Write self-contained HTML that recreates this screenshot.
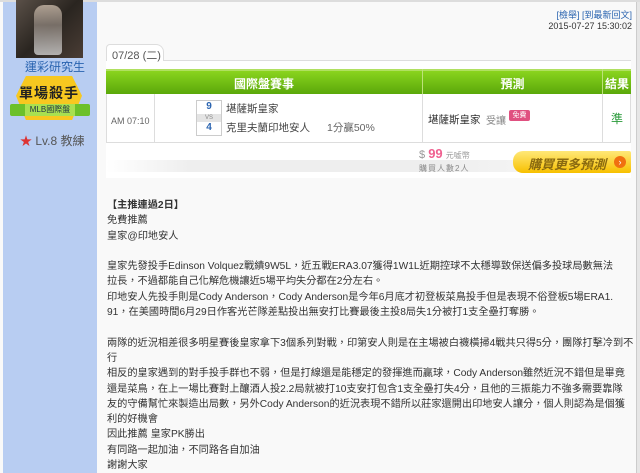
<!DOCTYPE html>
<html><head><meta charset="utf-8"><style>
*{margin:0;padding:0;box-sizing:border-box}
body{width:640px;height:473px;overflow:hidden;background:#f9f9f9;font-family:"Liberation Sans","Noto Sans CJK TC",sans-serif;font-size:11px;color:#333;position:relative}
.abs{position:absolute}
#side{left:3px;top:0;width:94px;height:473px;background:#b8cdf2}
#rb{left:636px;top:0;width:4px;height:473px;background:#e6e6e6;border-left:1px solid #ccc}
.t{white-space:nowrap}
.body p{height:15.3px;line-height:15.3px;white-space:nowrap}
</style></head><body>
<div id="side" class="abs"></div>
<div id="rb" class="abs"></div>
<div class="abs" style="left:0;top:0;width:640px;height:2px;background:#ddd"></div>
<!-- avatar -->
<div class="abs" style="left:16px;top:0;width:67px;height:58px;background:linear-gradient(135deg,#5a5048,#2a2520 50%,#4a3d35);"></div>
<div class="abs" style="left:34px;top:5px;width:28px;height:50px;background:linear-gradient(#c8b8a8,#8a8078 40%,#d0d0d0);border-radius:10px 10px 4px 4px;opacity:.8"></div>
<div class="abs t" style="left:25px;top:58px;color:#2a64b0;font-size:12px">運彩研究生</div>
<!-- badge -->
<div class="abs" style="left:16px;top:76px;width:66px;height:44px;background:#f7c820;clip-path:polygon(15% 0,85% 0,100% 45%,85% 100%,15% 100%,0 45%)"></div>
<div class="abs t" style="left:17px;top:83px;width:64px;text-align:center;font-weight:bold;font-size:14px;color:#222;letter-spacing:1px">單場殺手</div>
<div class="abs" style="left:10px;top:104px;width:80px;height:12px;background:#6cc02a;border-radius:2px"></div>
<div class="abs t" style="left:25px;top:104px;width:50px;height:12px;background:#a8e050;font-size:8px;text-align:center;line-height:12px;color:#234">MLB國際盤</div>
<div class="abs t" style="left:20px;top:132px;font-size:12px;color:#555"><span style="color:#d33">★</span> Lv.8 教練</div>
<!-- top right -->
<div class="abs t" style="right:8px;top:8px;font-size:9px;color:#2a64b0">[檢舉] [到最新回文]</div>
<div class="abs t" style="right:8px;top:21px;font-size:9px;color:#333">2015-07-27 15:30:02</div>
<!-- card -->
<div class="abs" style="left:106px;top:60px;width:525px;height:118px;background:#fff;border-top:1px solid #ddd"></div>
<div class="abs t" style="left:106px;top:44px;width:58px;height:17px;background:#fff;border:1px solid #ddd;border-bottom:none;border-radius:4px 8px 0 0;padding:2px 5px;color:#555;font-size:11px">07/28 (二)</div>
<div class="abs" style="left:106px;top:69px;width:525px;height:25px;background:linear-gradient(#8ad41e,#5aa80a);border-top:2px solid #b0e060"></div>
<div class="abs t" style="left:106px;top:75px;width:316px;text-align:center;color:#fff;font-weight:bold;font-size:12px">國際盤賽事</div>
<div class="abs" style="left:422px;top:69px;width:1px;height:25px;background:#bde27a"></div>
<div class="abs t" style="left:423px;top:75px;width:179px;text-align:center;color:#fff;font-weight:bold;font-size:12px">預測</div>
<div class="abs" style="left:602px;top:69px;width:1px;height:25px;background:#bde27a"></div>
<div class="abs t" style="left:603px;top:75px;width:28px;text-align:center;color:#fff;font-weight:bold;font-size:12px">結果</div>
<div class="abs" style="left:106px;top:94px;width:525px;height:49px;border:1px solid #ddd;border-top:none"></div>
<div class="abs" style="left:154px;top:94px;width:1px;height:48px;background:#ddd"></div>
<div class="abs" style="left:422px;top:94px;width:1px;height:48px;background:#ddd"></div>
<div class="abs" style="left:602px;top:94px;width:1px;height:48px;background:#ddd"></div>
<div class="abs t" style="left:111px;top:116px;font-size:9px;color:#666">AM 07:10</div>
<div class="abs" style="left:196px;top:100px;width:26px;height:36px;border:1px solid #ccc;background:#fff"></div>
<div class="abs t" style="left:196px;top:101px;width:26px;text-align:center;color:#2a64b0;font-weight:bold;font-size:10px">9</div>
<div class="abs" style="left:197px;top:114px;width:24px;height:8px;background:#e4e4e4;font-size:6px;text-align:center;color:#888;line-height:8px">VS</div>
<div class="abs t" style="left:196px;top:122px;width:26px;text-align:center;color:#2a64b0;font-weight:bold;font-size:10px">4</div>
<div class="abs t" style="left:226px;top:101px;font-size:10.5px;color:#444">堪薩斯皇家</div>
<div class="abs t" style="left:226px;top:120px;font-size:10.5px;color:#444">克里夫蘭印地安人</div>
<div class="abs t" style="left:327px;top:120px;font-size:10.5px;color:#666">1分贏50%</div>
<div class="abs t" style="left:428px;top:112px;font-size:10.5px;color:#333">堪薩斯皇家</div>
<div class="abs t" style="left:486px;top:112px;font-size:10px;color:#888">受讓</div>
<div class="abs" style="left:509px;top:110px;width:21px;height:11px;background:#e05080;border-radius:2px;font-size:7px;color:#fff;text-align:center;line-height:11px">免費</div>
<div class="abs t" style="left:611px;top:110px;font-size:12px;color:#2a9a3a">準</div>
<div class="abs" style="left:106px;top:160px;width:420px;height:12px;background:linear-gradient(90deg,#fff,#eee 20%,#eee 80%,#f4f4f4)"></div>
<div class="abs t" style="left:419px;top:146px;font-size:11px;color:#999">$ <span style="color:#f06090;font-weight:bold;font-size:13px">99</span> <span style="font-size:8px">元噓幣</span></div>
<div class="abs t" style="left:419px;top:163px;font-size:8px;color:#888;letter-spacing:1px">購買人數2人</div>
<div class="abs" style="left:513px;top:151px;width:118px;height:22px;background:linear-gradient(#ffe878,#f7c000);border-radius:10px 2px 2px 10px"></div>
<div class="abs t" style="left:528px;top:154px;font-size:13px;font-weight:bold;font-style:italic;color:#8a6a10">購買更多預測</div>
<div class="abs" style="left:614px;top:156px;width:12px;height:12px;border-radius:50%;background:#f07010;color:#fff;font-size:9px;text-align:center;line-height:12px">›</div>
<!-- body -->
<div class="abs body" style="left:107px;top:198px;font-size:10.2px;color:#333">
<p style="font-weight:bold">【主推連過2日】</p>
<p>免費推薦</p>
<p>皇家@印地安人</p>
<p></p>
<p>皇家先發投手Edinson Volquez戰績9W5L，近五戰ERA3.07獲得1W1L近期控球不太穩導致保送偏多投球局數無法</p>
<p>拉長，不過都能自己化解危機讓近5場平均失分都在2分左右。</p>
<p>印地安人先投手則是Cody Anderson，Cody Anderson是今年6月底才初登板菜鳥投手但是表現不俗登板5場ERA1.</p>
<p>91，在美國時間6月29日作客光芒隊差點投出無安打比賽最後主投8局失1分被打1支全壘打奪勝。</p>
<p></p>
<p>兩隊的近況相差很多明星賽後皇家拿下3個系列對戰，印第安人則是在主場被白襪橫掃4戰共只得5分，團隊打擊冷到不</p>
<p>行</p>
<p>相反的皇家遇到的對手投手群也不弱，但是打線還是能穩定的發揮進而贏球，Cody Anderson雖然近況不錯但是畢竟</p>
<p>還是菜鳥，在上一場比賽對上釀酒人投2.2局就被打10支安打包含1支全壘打失4分，且他的三振能力不強多需要靠隊</p>
<p>友的守備幫忙來製造出局數，另外Cody Anderson的近況表現不錯所以莊家還開出印地安人讓分，個人則認為是個獲</p>
<p>利的好機會</p>
<p>因此推薦 皇家PK勝出</p>
<p>有同路一起加油，不同路各自加油</p>
<p>謝謝大家</p>
</div>
</body></html>
